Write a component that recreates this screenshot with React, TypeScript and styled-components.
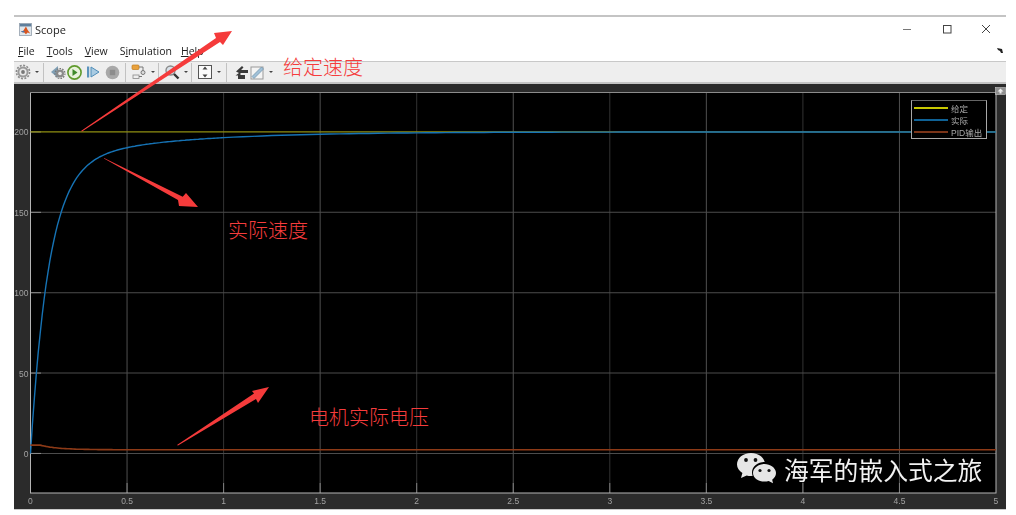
import React from 'react';
import styled, { createGlobalStyle } from 'styled-components';

const GlobalCss = createGlobalStyle`
  html, body { margin: 0; padding: 0; background: #fff; }
  body { width: 1016px; height: 515px; overflow: hidden; font-family: 'Open Sans', 'Liberation Sans', sans-serif; }
`;

const PageCss = styled.div`
  position: relative;
  width: 1016px;
  height: 515px;
  padding: 15px 10px 7px 14px;
  box-sizing: border-box;
`;

const WindowCss = styled.div`
  display: flex;
  flex-direction: column;
  height: 100%;
  border-top: 2px solid #c4c4c4;
  filter: blur(0.3px);
`;

const TitleBarCss = styled.div`
  display: flex;
  align-items: center;
  height: 24px;
  padding-left: 5px;
  background: #fff;
  flex: none;
`;

const TitleCss = styled.span`
  margin-left: 3px;
  font-size: 11px;
  color: #222;
`;

const WinControlsCss = styled.div`
  display: flex;
  margin-left: auto;
`;

const WinButtonCss = styled.div`
  display: flex;
  align-items: center;
  justify-content: center;
  width: 39.5px;
  height: 24px;
`;

const MenuBarCss = styled.div`
  display: flex;
  align-items: center;
  position: relative;
  height: 20px;
  padding-left: 4px;
  background: #fff;
  flex: none;
  font-size: 10.5px;
  color: #222;
`;

const MenuItemCss = styled.span<{ $gap: number }>`
  margin-right: ${props => props.$gap}px;
  u { text-underline-offset: 1px; }
`;

const ResizeMarkCss = styled.svg`
  position: absolute;
  right: 2px;
  top: 7px;
`;

const ToolbarCss = styled.div`
  display: flex;
  align-items: center;
  height: 23px;
  box-sizing: border-box;
  background: #eeeeee;
  border-top: 1px solid #c8c8c8;
  border-bottom: 2px solid #c4c4c4;
  flex: none;
`;

const ToolGroupCss = styled.div<{ $width: number; $pad: number; $sep?: boolean }>`
  display: flex;
  align-items: center;
  width: ${props => props.$width}px;
  height: 19px;
  padding-left: ${props => props.$pad}px;
  box-sizing: border-box;
  border-right: ${props => (props.$sep ? '1px solid #c2c2c2' : 'none')};
`;

const ToolCss = styled.div<{ $width: number }>`
  display: flex;
  align-items: center;
  justify-content: center;
  width: ${props => props.$width}px;
  flex: none;
`;

const CaretCss = styled.div`
  width: 0;
  height: 0;
  margin-left: 4px;
  border-left: 2px solid transparent;
  border-right: 2px solid transparent;
  border-top: 2px solid #444;
`;

const ScopePanelCss = styled.div`
  position: relative;
  flex: 1;
  min-height: 0;
  background: #2b2b2b;
  border-bottom: 1px solid #c9c9c9;
`;

const PlotSvgCss = styled.svg`
  display: block;
  width: 100%;
  height: 100%;
`;

const LegendCss = styled.div`
  position: absolute;
  left: 897px;
  top: 16px;
  width: 76px;
  height: 39px;
  box-sizing: border-box;
  padding: 1px 0 0 2px;
  background: #000;
  border: 1px solid #a8a8a8;
  border-top-color: #666;
  display: flex;
  flex-direction: column;
`;

const LegendRowCss = styled.div`
  display: flex;
  align-items: center;
  height: 12px;
  font-size: 8.5px;
  color: #a9a9a9;
  font-family: 'Liberation Sans', 'Noto Sans CJK SC', sans-serif;
`;

const LegendLineCss = styled.span<{ $color: string }>`
  flex: none;
  width: 34px;
  height: 1.5px;
  margin-right: 3px;
  background-color: ${props => props.$color};
`;

const WatermarkCss = styled.div`
  position: absolute;
  left: 723px;
  top: 367px;
  display: flex;
  align-items: center;
  color: #f2f2f2;
  font-size: 24.8px;
  line-height: 36px;
  font-family: 'Noto Sans CJK SC', sans-serif;
  white-space: nowrap;
`;

const WeChatCss = styled.svg`
  margin-right: 7px;
  flex: none;
`;

const ArrowsCss = styled.svg`
  position: absolute;
  left: 0;
  top: 0;
  pointer-events: none;
`;

const NoteCss = styled.div<{ $left: number; $top: number }>`
  position: absolute;
  left: ${props => props.$left}px;
  top: ${props => props.$top}px;
  color: #f53c3c;
  font-size: 20px;
  line-height: 26px;
  font-family: 'Noto Sans CJK SC', sans-serif;
  font-weight: 300;
  white-space: nowrap;
`;

const X0 = 30.5;
const XSTEP = 193.1;
const Y0 = 451.7;
const YSCALE = 1.6;

const px = (t: number) => X0 + XSTEP * t;
const py = (v: number) => Y0 - YSCALE * v;

function trace(fn: (t: number) => number) {
  const pts: string[] = [];
  for (let t = 0; t <= 5; t += t < 1 ? 0.01 : 0.05) {
    pts.push(`${px(t).toFixed(1)},${py(fn(t)).toFixed(1)}`);
  }
  return pts.join(' ');
}

const actual = (t: number) =>
  200 - 178 * Math.exp(-t / 0.095) - 22 * Math.exp(-t / 0.55);
const pidOut = (t: number) =>
  t < 0.05 ? 5.2 : 2.3 + 2.9 * Math.exp(-(t - 0.05) / 0.09);

const xTicks = [0, 0.5, 1, 1.5, 2, 2.5, 3, 3.5, 4, 4.5, 5];
const yTicks = [0, 50, 100, 150, 200];

function Plot() {
  return (
    <PlotSvgCss viewBox="14 84 992 423" preserveAspectRatio="none">
      <rect x="30.5" y="92.5" width="965.5" height="398.5" fill="#000" />
      {xTicks.slice(1, -1).map((t, i) => (
        <line
          key={t}
          x1={px(t)}
          x2={px(t)}
          y1="92"
          y2="491"
          stroke={i % 2 === 0 ? '#505050' : '#333'}
        />
      ))}
      {yTicks.slice(0, 4).map(v => (
        <line key={v} x1="30" x2="996" y1={py(v)} y2={py(v)} stroke="#4c4c4c" />
      ))}
      {xTicks.slice(1, -1).map(t => (
        <line key={t} x1={px(t)} x2={px(t)} y1="481" y2="491" stroke="#808080" />
      ))}
      {yTicks.map(v => (
        <line key={v} x1="30" x2="41" y1={py(v)} y2={py(v)} stroke="#8c8c8c" />
      ))}
      <polyline points="30.5,92.5 996,92.5" fill="none" stroke="#8c8c8c" />
      <polyline points="30.5,92.5 30.5,491 996,491 996,92.5" fill="none" stroke="#b4b4b4" />
      <line x1="30.5" x2="996" y1={py(200)} y2={py(200)} stroke="#8f8f12" strokeWidth="1.3" />
      <polyline points={trace(actual)} fill="none" stroke="#1673b5" strokeWidth="1.4" />
      <polyline points={trace(pidOut)} fill="none" stroke="#8d3a17" strokeWidth="1.6" />
      {xTicks.map(t => (
        <text
          key={t}
          x={px(t)}
          y="502"
          fontSize="8.5"
          fill="#a2a2a2"
          textAnchor="middle"
          fontFamily="Liberation Sans, sans-serif"
        >
          {t}
        </text>
      ))}
      {yTicks.map(v => (
        <text
          key={v}
          x="28.5"
          y={py(v) + 3.5}
          fontSize="8.5"
          fill="#a2a2a2"
          textAnchor="end"
          fontFamily="Liberation Sans, sans-serif"
        >
          {v}
        </text>
      ))}
      <rect x="995.5" y="87.5" width="10" height="7" fill="#8f8f8f" stroke="#c8c8c8" strokeWidth="0.6" />
      <path d="M1000.5 88.5l3 3h-2v2h-2v-2h-2z" fill="#eee" stroke="none" />
    </PlotSvgCss>
  );
}

function MatlabLogo() {
  return (
    <svg width="13" height="13" viewBox="0 0 15 15">
      <rect x="0.5" y="0.5" width="14" height="14" fill="#dfe6ec" stroke="#9aa7b2" />
      <rect x="1" y="1" width="13" height="3" fill="#5f7f9c" />
      <path d="M2 10l3-1 3-5 2 4 3 4-3-1-2 2-2-2z" fill="#d9541e" />
      <path d="M2 10l3-1 2 1-2 1z" fill="#3f79b5" />
    </svg>
  );
}

function GearIcon() {
  return (
    <svg width="16" height="16" viewBox="0 0 16 16">
      <circle cx="8" cy="8" r="5.6" fill="#9a9a9a" />
      <circle cx="8" cy="8" r="6.6" fill="none" stroke="#8a8a8a" strokeWidth="1.6" strokeDasharray="2 1.45" />
      <circle cx="8" cy="8" r="3.6" fill="#e8e8e8" />
      <circle cx="8" cy="8" r="1.9" fill="#777" />
    </svg>
  );
}

function LibraryIcon() {
  return (
    <svg width="16" height="16" viewBox="0 0 16 16">
      <path d="M1 8l7-6v12z" fill="#7f9fb5" />
      <circle cx="10" cy="9.5" r="4" fill="#8a8a8a" />
      <circle cx="10" cy="9.5" r="5" fill="none" stroke="#777" strokeWidth="1.2" strokeDasharray="1.6 1.2" />
      <circle cx="10" cy="9.5" r="1.8" fill="#e8e8e8" />
    </svg>
  );
}

function PlayIcon() {
  return (
    <svg width="15" height="15" viewBox="0 0 15 15">
      <circle cx="7.5" cy="7.5" r="6.6" fill="#e8f2dc" stroke="#5f9a2c" strokeWidth="1.6" />
      <path d="M5.5 4l5 3.5-5 3.5z" fill="#3f8a2a" />
    </svg>
  );
}

function StepIcon() {
  return (
    <svg width="14" height="14" viewBox="0 0 14 14">
      <rect x="1" y="1.5" width="2.2" height="11" fill="#5b93bd" />
      <path d="M5 2l8 5-8 5z" fill="#a9cbe2" stroke="#4f8db8" />
    </svg>
  );
}

function StopIcon() {
  return (
    <svg width="15" height="15" viewBox="0 0 15 15">
      <circle cx="7.5" cy="7.5" r="6.8" fill="#a8a8a8" />
      <rect x="4.8" y="4.8" width="5.4" height="5.4" fill="#8c8c8c" />
    </svg>
  );
}

function SignalIcon() {
  return (
    <svg width="16" height="16" viewBox="0 0 16 16">
      <rect x="1" y="1" width="7" height="4.5" rx="1" fill="#e9a13c" stroke="#c07c1c" strokeWidth="0.7" />
      <path d="M8 3h4v4M12 7l-2 2" fill="none" stroke="#777" />
      <circle cx="12" cy="8.5" r="2" fill="#ddd" stroke="#777" />
      <rect x="2" y="11" width="6" height="3.5" fill="#eee" stroke="#888" strokeWidth="0.8" />
      <path d="M8 12.5h3" stroke="#777" />
    </svg>
  );
}

function ZoomIcon() {
  return (
    <svg width="16" height="16" viewBox="0 0 16 16">
      <circle cx="6.5" cy="6.5" r="4.5" fill="#d8e2ea" stroke="#8a8a8a" strokeWidth="1.4" />
      <path d="M10 10l4.5 4.5" stroke="#333" strokeWidth="2.4" />
    </svg>
  );
}

function FitIcon() {
  return (
    <svg width="16" height="16" viewBox="0 0 16 16">
      <rect x="1.5" y="1.5" width="13" height="13" fill="#fafafa" stroke="#555" />
      <path d="M8 2.5l2.5 3h-5zM8 13.5l-2.5-3h5z" fill="#444" />
    </svg>
  );
}

function StyleIcon() {
  return (
    <svg width="15" height="15" viewBox="0 0 15 15">
      <path d="M2 6.5L8 1l1.5 1.5L7 5h7v3H6.5v2H11v4H4v-3.5H1.5L5 8z" fill="#3a3a3a" />
    </svg>
  );
}

function RulerIcon() {
  return (
    <svg width="15" height="15" viewBox="0 0 15 15">
      <rect x="1" y="2" width="12" height="12" fill="#f4f4f4" stroke="#9a9a9a" />
      <path d="M2 11.5L11.5 2l2 2L4 13.5z" fill="#9fc0d8" stroke="#6d8fa8" strokeWidth="0.7" />
    </svg>
  );
}

function Arrows() {
  return (
    <ArrowsCss width="1016" height="515" viewBox="0 0 1016 515">
      <polygon points="81,131 216,38 214,33 232,31 223,45 220,42 82,131.5" fill="#f53b3b" />
      <polygon points="104,158 182.7,196.7 186,193 198,207 179,206 178,200 104,158.5" fill="#f53b3b" />
      <polygon points="177,445 254,393.5 252,391 269,387 258,403 256,399 178,445.5" fill="#f53b3b" />
    </ArrowsCss>
  );
}

export default function App() {
  return (
    <PageCss>
      <GlobalCss />
      <WindowCss>
        <TitleBarCss>
          <MatlabLogo />
          <TitleCss>Scope</TitleCss>
          <WinControlsCss>
            <WinButtonCss>
              <svg width="10" height="10"><path d="M1 5.5h8" stroke="#777" /></svg>
            </WinButtonCss>
            <WinButtonCss>
              <svg width="10" height="10"><rect x="1.5" y="1.5" width="7.5" height="7.5" fill="none" stroke="#444" /></svg>
            </WinButtonCss>
            <WinButtonCss>
              <svg width="10" height="10"><path d="M1 1l8 8M9 1l-8 8" stroke="#444" /></svg>
            </WinButtonCss>
          </WinControlsCss>
        </TitleBarCss>
        <MenuBarCss>
          <MenuItemCss $gap={12}><u>F</u>ile</MenuItemCss>
          <MenuItemCss $gap={12}><u>T</u>ools</MenuItemCss>
          <MenuItemCss $gap={12}><u>V</u>iew</MenuItemCss>
          <MenuItemCss $gap={9}>S<u>i</u>mulation</MenuItemCss>
          <MenuItemCss $gap={0}><u>H</u>elp</MenuItemCss>
          <ResizeMarkCss width="7" height="6" viewBox="0 0 7 6">
            <path d="M0 0l5 1 1 4H4L3 3 1 2z" fill="#222" />
          </ResizeMarkCss>
        </MenuBarCss>
        <ToolbarCss>
          <ToolGroupCss $width={30} $pad={1} $sep>
            <ToolCss $width={16}><GearIcon /></ToolCss>
            <CaretCss />
          </ToolGroupCss>
          <ToolGroupCss $width={82} $pad={5} $sep>
            <ToolCss $width={17}><LibraryIcon /></ToolCss>
            <ToolCss $width={17}><PlayIcon /></ToolCss>
            <ToolCss $width={19}><StepIcon /></ToolCss>
            <ToolCss $width={21}><StopIcon /></ToolCss>
          </ToolGroupCss>
          <ToolGroupCss $width={33} $pad={5} $sep>
            <ToolCss $width={16}><SignalIcon /></ToolCss>
            <CaretCss />
          </ToolGroupCss>
          <ToolGroupCss $width={33} $pad={5} $sep>
            <ToolCss $width={16}><ZoomIcon /></ToolCss>
            <CaretCss />
          </ToolGroupCss>
          <ToolGroupCss $width={35} $pad={5} $sep>
            <ToolCss $width={16}><FitIcon /></ToolCss>
            <CaretCss />
          </ToolGroupCss>
          <ToolGroupCss $width={60} $pad={7}>
            <ToolCss $width={15}><StyleIcon /></ToolCss>
            <ToolCss $width={16}><RulerIcon /></ToolCss>
            <CaretCss />
          </ToolGroupCss>
        </ToolbarCss>
        <ScopePanelCss>
          <Plot />
          <LegendCss>
            <LegendRowCss><LegendLineCss $color="#c8c800" />给定</LegendRowCss>
            <LegendRowCss><LegendLineCss $color="#0f6296" />实际</LegendRowCss>
            <LegendRowCss><LegendLineCss $color="#7a3418" />PID输出</LegendRowCss>
          </LegendCss>
          <WatermarkCss>
            <WeChatCss width="40" height="34" viewBox="0 0 40 34">
              <path d="M14 1c8 0 14 5 14 11.5 0 6.5-6 11.5-14 11.5-1.5 0-3-.2-4.3-.6L4 26l1.4-5C2.2 18.8 0 15.8 0 12.5 0 6 6 1 14 1z" fill="#e6e6e6" />
              <path d="M27.5 10C34 10 40 14.5 40 21c0 3-1.5 5.5-4 7.5l1 4.5-5-2.7c-1.5.4-3 .7-4.5.7-6.8 0-12.5-4.5-12.5-10.5S20.7 10 27.5 10z" fill="#000" />
              <path d="M27.5 12C33 12 39 15.8 39 21c0 2.7-1.5 5-3.8 6.8l.8 3.5-4.3-2.3c-1.4.4-2.8.6-4.2.6C21.5 29.6 16 26 16 21s5.5-9 11.5-9z" fill="#e6e6e6" />
              <circle cx="9" cy="8" r="1.9" fill="#111" />
              <circle cx="18.5" cy="8" r="1.9" fill="#111" />
              <circle cx="23" cy="18.5" r="1.6" fill="#111" />
              <circle cx="32" cy="18.5" r="1.6" fill="#111" />
            </WeChatCss>
            海军的嵌入式之旅
          </WatermarkCss>
        </ScopePanelCss>
      </WindowCss>
      <Arrows />
      <NoteCss $left={283} $top={54}>给定速度</NoteCss>
      <NoteCss $left={228} $top={217}>实际速度</NoteCss>
      <NoteCss $left={309} $top={404}>电机实际电压</NoteCss>
    </PageCss>
  );
}
